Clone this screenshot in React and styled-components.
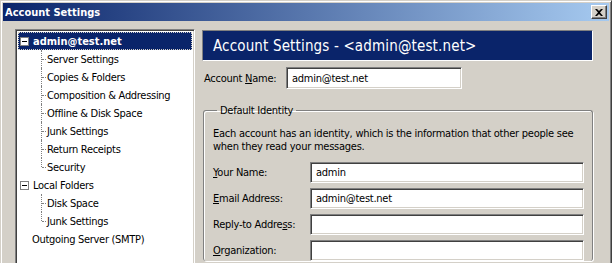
import React from "react";
import styled, { createGlobalStyle } from "styled-components";

const GlobalStyle = createGlobalStyle`
  html, body {
    margin: 0;
    padding: 0;
    background: #d4d0c8;
    overflow: hidden;
  }
  body {
    font-family: "DejaVu Sans Condensed", "DejaVu Sans", sans-serif;
    font-size: 11px;
    letter-spacing: -0.25px;
    color: #000;
  }
`;

const Window = styled.div`
  width: 612px;
  height: 263px;
  box-sizing: border-box;
  background: #d4d0c8;
  border-top: 1px solid #d4d0c8;
  border-left: 1px solid #d4d0c8;
  border-right: 1px solid #404040;
  box-shadow: inset 1px 1px #ffffff, inset -1px 0 #808080;
  padding: 2px 2px 0 2px;
  display: flex;
  flex-direction: column;
  overflow: hidden;
`;

const TitleBar = styled.div`
  height: 18px;
  display: flex;
  align-items: center;
  justify-content: space-between;
  padding: 0 2px 0 2px;
  background: linear-gradient(to right, #0a246a, #a6caf0);
  color: #fff;
  font-weight: bold;
  font-size: 11px;
  letter-spacing: 0;
`;

const CloseButton = styled.div`
  width: 16px;
  height: 14px;
  box-sizing: border-box;
  background: #d4d0c8;
  border-top: 1px solid #ffffff;
  border-left: 1px solid #ffffff;
  border-right: 1px solid #404040;
  border-bottom: 1px solid #404040;
  box-shadow: inset -1px -1px #808080;
  display: flex;
  align-items: center;
  justify-content: center;
`;

const Body = styled.div`
  flex: 1;
  display: flex;
  gap: 7px;
  padding: 8px 15px 0 12px;
  min-height: 0;
`;

const TreePanel = styled.div`
  width: 180px;
  box-sizing: border-box;
  background: #fff;
  border-top: 1px solid #808080;
  border-left: 1px solid #808080;
  border-right: 1px solid #ffffff;
  box-shadow: inset 1px 1px #404040, inset -1px 0 #d4d0c8;
  padding: 2px 2px 0 2px;
`;

const Row = styled.div`
  position: relative;
  height: 18px;
  display: flex;
  align-items: center;
  gap: 3px;
  box-sizing: border-box;
  padding-left: ${(p) => (p.$level === 1 ? 29 : p.$box ? 2 : 14)}px;
  background: ${(p) => (p.$selected ? "#0a246a" : "transparent")};
  color: ${(p) => (p.$selected ? "#fff" : "#000")};
  font-weight: ${(p) => (p.$selected ? "bold" : "normal")};
  letter-spacing: ${(p) => (p.$selected ? "0" : "-0.3px")};
  outline: ${(p) => (p.$selected ? "1px dotted #d4d0c8" : "none")};
  outline-offset: -1px;
  white-space: nowrap;

  ${(p) =>
    p.$level === 1 &&
    `
    &::before {
      content: "";
      position: absolute;
      left: 23px;
      top: 0;
      height: ${p.$last ? "9px" : "18px"};
      border-left: 1px dotted #808080;
    }
    &::after {
      content: "";
      position: absolute;
      left: 24px;
      top: 9px;
      width: 4px;
      border-top: 1px dotted #808080;
    }
  `}
`;

const Toggle = styled.span`
  width: 9px;
  height: 9px;
  box-sizing: border-box;
  border: 1px solid #808080;
  background: #fff;
  display: inline-flex;
  align-items: center;
  justify-content: center;
  flex: none;
  margin-right: 1px;
  &::after {
    content: "";
    width: 5px;
    height: 1px;
    background: #000;
  }
`;

const Main = styled.div`
  width: 391px;
  display: flex;
  flex-direction: column;
  padding-top: 1px;
`;

const Header = styled.div`
  height: 31px;
  box-sizing: border-box;
  background: #0a246a;
  color: #fff;
  font-size: 15px;
  letter-spacing: 0.15px;
  display: flex;
  align-items: center;
  padding-left: 10px;
  border-top: 1px solid #808080;
  border-left: 1px solid #808080;
  border-right: 1px solid #ffffff;
  border-bottom: 1px solid #ffffff;
`;

const FieldRow = styled.div`
  display: flex;
  align-items: center;
  height: ${(p) => p.$h || 21}px;
  margin-top: ${(p) => p.$mt || 0}px;
`;

const Label = styled.label`
  width: ${(p) => p.$w}px;
  padding-left: ${(p) => p.$pl || 0}px;
  box-sizing: border-box;
  flex: none;
  white-space: nowrap;
  u {
    text-decoration: underline;
  }
`;

const TextBox = styled.div`
  width: ${(p) => p.$w}px;
  height: 100%;
  box-sizing: border-box;
  background: #fff;
  border-top: 1px solid #808080;
  border-left: 1px solid #808080;
  border-right: 1px solid #ffffff;
  border-bottom: 1px solid #ffffff;
  box-shadow: inset 1px 1px #404040, inset -1px -1px #d4d0c8;
  display: flex;
  align-items: center;
  padding-left: 5px;
`;

const Fieldset = styled.fieldset`
  margin: 15px 0 0 1px;
  padding: 10px 8px 0 9px;
  border: 1px solid #808080;
  box-shadow: inset 1px 1px #fff, 1px 1px #fff;
  border-radius: 3px;
  min-width: 0;
  border-bottom: none;
`;

const Legend = styled.legend`
  padding: 0 3px;
  margin-left: 4px;
`;

const Note = styled.p`
  margin: 0 0 9px 0;
  line-height: 13px;
  white-space: nowrap;
`;

const treeRows = [
  { text: "admin@test.net", box: true, selected: true },
  { text: "Server Settings", level: 1 },
  { text: "Copies & Folders", level: 1 },
  { text: "Composition & Addressing", level: 1 },
  { text: "Offline & Disk Space", level: 1 },
  { text: "Junk Settings", level: 1 },
  { text: "Return Receipts", level: 1 },
  { text: "Security", level: 1, last: true },
  { text: "Local Folders", box: true },
  { text: "Disk Space", level: 1 },
  { text: "Junk Settings", level: 1, last: true },
  { text: "Outgoing Server (SMTP)" },
];

const identity = [
  { label: ["", "Y", "our Name:"], value: "admin" },
  { label: ["", "E", "mail Address:"], value: "admin@test.net" },
  { label: ["Reply-to Addre", "s", "s:"], value: "" },
  { label: ["", "O", "rganization:"], value: "" },
];

export default function App() {
  return (
    <>
      <GlobalStyle />
      <Window>
        <TitleBar>
          <span>Account Settings</span>
          <CloseButton>
            <svg width="8" height="7" viewBox="0 0 8 7">
              <path d="M0 0h2l2 2 2-2h2L5 3.5 8 7H6L4 5 2 7H0l3-3.5z" fill="#000" />
            </svg>
          </CloseButton>
        </TitleBar>
        <Body>
          <TreePanel>
            {treeRows.map((r, i) => (
              <Row
                key={i}
                $level={r.level || 0}
                $box={r.box}
                $selected={r.selected}
                $last={r.last}
              >
                {r.box && <Toggle />}
                <span>{r.text}</span>
              </Row>
            ))}
          </TreePanel>
          <Main>
            <Header>Account Settings - &lt;admin@test.net&gt;</Header>
            <FieldRow $h={22} $mt={6}>
              <Label $w={84} $pl={2}>
                Account <u>N</u>ame:
              </Label>
              <TextBox $w={176}>admin@test.net</TextBox>
            </FieldRow>
            <Fieldset>
              <Legend>Default Identity</Legend>
              <Note>
                Each account has an identity, which is the information that other people see
                <br />
                when they read your messages.
              </Note>
              {identity.map((f, i) => (
                <FieldRow key={i} $mt={i ? 5 : 0}>
                  <Label $w={97}>
                    {f.label[0]}
                    <u>{f.label[1]}</u>
                    {f.label[2]}
                  </Label>
                  <TextBox $w={274}>{f.value}</TextBox>
                </FieldRow>
              ))}
            </Fieldset>
          </Main>
        </Body>
      </Window>
    </>
  );
}
